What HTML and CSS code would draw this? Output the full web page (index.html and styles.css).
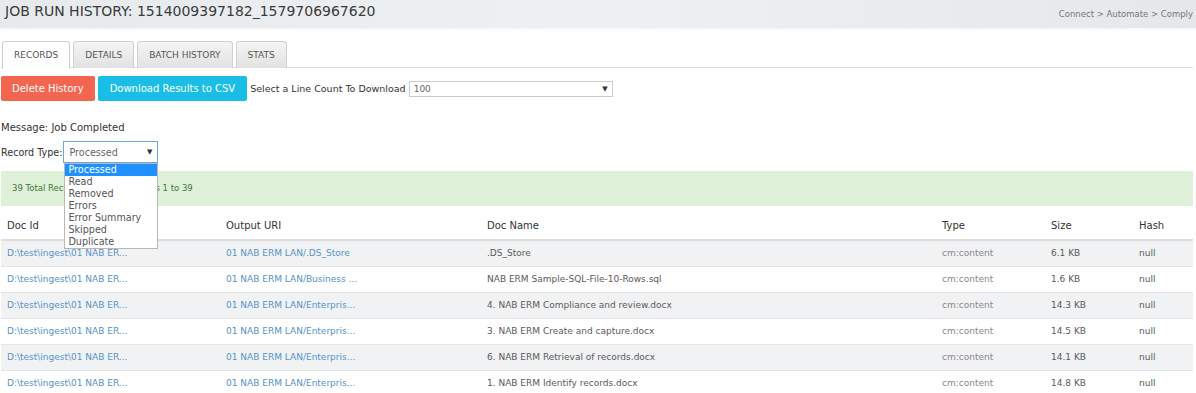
FILE: index.html
```html
<!DOCTYPE html>
<html lang="en">
<head>
    <meta charset="UTF-8">
    <title>Job Run History</title>
    <link rel="stylesheet" href="styles.css">
</head>
<body>
    <div class="page-header">
        <h1>JOB RUN HISTORY: 1514009397182_1579706967620</h1>
        <span class="tagline">Connect &gt; Automate &gt; Comply</span>
    </div>

    <div class="content">
        <ul class="tabs">
            <li class="tab active">RECORDS</li>
            <li class="tab">DETAILS</li>
            <li class="tab">BATCH HISTORY</li>
            <li class="tab">STATS</li>
        </ul>

        <div class="toolbar">
            <button class="btn btn-danger">Delete History</button>
            <button class="btn btn-info">Download Results to CSV</button>
            <label class="toolbar-label">Select a Line Count To Download</label>
            <div class="select line-count">
                <span>100</span>
                <span class="caret">&#9660;</span>
            </div>
        </div>

        <p class="message">Message: Job Completed</p>

        <div class="record-type">
            <label>Record Type:</label>
            <div class="select-wrap">
                <div class="select type-select">
                    <span>Processed</span>
                    <span class="caret">&#9660;</span>
                </div>
                <ul class="dropdown">
                    <li class="selected">Processed</li>
                    <li>Read</li>
                    <li>Removed</li>
                    <li>Errors</li>
                    <li>Error Summary</li>
                    <li>Skipped</li>
                    <li>Duplicate</li>
                </ul>
            </div>
        </div>

        <div class="alert">39 Total Records, Showing Records 1 to 39</div>

        <table class="records">
            <thead>
                <tr>
                    <th class="c-id">Doc Id</th>
                    <th class="c-uri">Output URI</th>
                    <th class="c-name">Doc Name</th>
                    <th class="c-type">Type</th>
                    <th class="c-size">Size</th>
                    <th>Hash</th>
                </tr>
            </thead>
            <tbody>
                <tr>
                    <td class="link">D:\test\ingest\01 NAB ER...</td>
                    <td class="link">01 NAB ERM LAN/.DS_Store</td>
                    <td>.DS_Store</td>
                    <td class="muted">cm:content</td>
                    <td>6.1 KB</td>
                    <td>null</td>
                </tr>
                <tr>
                    <td class="link">D:\test\ingest\01 NAB ER...</td>
                    <td class="link">01 NAB ERM LAN/Business ...</td>
                    <td>NAB ERM Sample-SQL-File-10-Rows.sql</td>
                    <td class="muted">cm:content</td>
                    <td>1.6 KB</td>
                    <td>null</td>
                </tr>
                <tr>
                    <td class="link">D:\test\ingest\01 NAB ER...</td>
                    <td class="link">01 NAB ERM LAN/Enterpris...</td>
                    <td>4. NAB ERM Compliance and review.docx</td>
                    <td class="muted">cm:content</td>
                    <td>14.3 KB</td>
                    <td>null</td>
                </tr>
                <tr>
                    <td class="link">D:\test\ingest\01 NAB ER...</td>
                    <td class="link">01 NAB ERM LAN/Enterpris...</td>
                    <td>3. NAB ERM Create and capture.docx</td>
                    <td class="muted">cm:content</td>
                    <td>14.5 KB</td>
                    <td>null</td>
                </tr>
                <tr>
                    <td class="link">D:\test\ingest\01 NAB ER...</td>
                    <td class="link">01 NAB ERM LAN/Enterpris...</td>
                    <td>6. NAB ERM Retrieval of records.docx</td>
                    <td class="muted">cm:content</td>
                    <td>14.1 KB</td>
                    <td>null</td>
                </tr>
                <tr>
                    <td class="link">D:\test\ingest\01 NAB ER...</td>
                    <td class="link">01 NAB ERM LAN/Enterpris...</td>
                    <td>1. NAB ERM Identify records.docx</td>
                    <td class="muted">cm:content</td>
                    <td>14.8 KB</td>
                    <td>null</td>
                </tr>
            </tbody>
        </table>
    </div>
</body>
</html>
```

FILE: styles.css
```css
* {
    margin: 0;
    padding: 0;
    box-sizing: border-box;
}

body {
    font-family: "DejaVu Sans", "Open Sans", sans-serif;
    font-size: 10px;
    color: #444;
    background: #fff;
}

.page-header {
    height: 28px;
    background: linear-gradient(90deg, #e6eaed 0%, #eef1f3 50%, #e4e8eb 100%);
    display: flex;
    justify-content: space-between;
    align-items: flex-end;
    padding: 0 3px 4px 5px;
    box-shadow: 0 1px 2px rgba(0, 0, 0, 0.06);
}

.page-header h1 {
    font-size: 14px;
    font-weight: normal;
    color: #3a3a3a;
    align-self: center;
    margin-top: -3px;
}

.tagline {
    font-size: 8.5px;
    color: #777;
    margin-bottom: 5px;
}

.content {
    padding: 0 3px 0 1px;
}

.tabs {
    list-style: none;
    display: flex;
    gap: 3px;
    margin-top: 13px;
    padding-left: 1px;
    border-bottom: 1px solid #ddd;
    height: 27px;
}

.tab {
    padding: 0 11px;
    height: 27px;
    line-height: 26px;
    font-size: 9px;
    color: #555;
    border: 1px solid #d0d0d0;
    border-bottom: none;
    border-radius: 3px 3px 0 0;
    background: linear-gradient(#f4f4f4, #e2e2e2);
}

.tab.active {
    background: #fff;
    height: 28px;
}

.toolbar {
    display: flex;
    align-items: center;
    margin-top: 8px;
    gap: 3px;
}

.btn {
    height: 25px;
    border: none;
    border-radius: 2px;
    color: #fff;
    font-family: inherit;
    font-size: 10px;
    padding: 0 11px;
}

.btn-info {
    background: #19bde6;
    padding: 0 12px;
}

.btn-danger {
    background: #f4654f;
}

.toolbar-label {
    font-size: 9.5px;
    color: #333;
}

.select {
    display: flex;
    justify-content: space-between;
    align-items: center;
    border: 1px solid #ccc;
    background: #fff;
    font-size: 9px;
    color: #666;
    padding: 0 4px;
}

.caret {
    font-size: 7px;
    color: #333;
}

.line-count {
    width: 204px;
    height: 16px;
}

.message {
    margin-top: 21px;
    font-size: 10px;
    color: #333;
}

.record-type {
    display: flex;
    align-items: center;
    gap: 1px;
    margin-top: 8px;
    font-size: 9.6px;
    color: #333;
}

.select-wrap {
    position: relative;
}

.type-select {
    width: 95px;
    height: 22px;
    border-color: #6aa7e0;
    font-size: 9.6px;
    padding: 0 5px;
}

.dropdown {
    position: absolute;
    top: 22px;
    left: 1px;
    width: 94px;
    list-style: none;
    background: #fff;
    border: 1px solid #b8b8b8;
    z-index: 10;
    font-size: 9.6px;
    color: #555;
}

.dropdown li {
    height: 12px;
    line-height: 12px;
    padding-left: 3px;
}

.dropdown li.selected {
    background: #1e90ff;
    color: #fff;
}

.alert {
    margin-top: 8px;
    height: 35px;
    background: #dff0d8;
    color: #3c763d;
    font-size: 8.5px;
    line-height: 35px;
    padding-left: 11px;
}

.records {
    width: 100%;
    border-collapse: collapse;
    font-size: 9px;
}

.records th {
    text-align: left;
    font-weight: normal;
    font-size: 10px;
    color: #333;
    height: 34px;
    padding: 5px 6px 0;
    border-bottom: 2px solid #ddd;
}

.records td {
    height: 26px;
    padding: 0 6px;
    border-top: 1px solid #e4e4e4;
    color: #5a5a5a;
    white-space: nowrap;
}

.records tbody tr:nth-child(odd) {
    background: #f1f2f4;
}

.records td.link {
    color: #5592c8;
}

.records td.muted {
    color: #888;
}

.c-id { width: 219px; }
.c-uri { width: 261px; }
.c-name { width: 455px; }
.c-type { width: 109px; }
.c-size { width: 88px; }
```
